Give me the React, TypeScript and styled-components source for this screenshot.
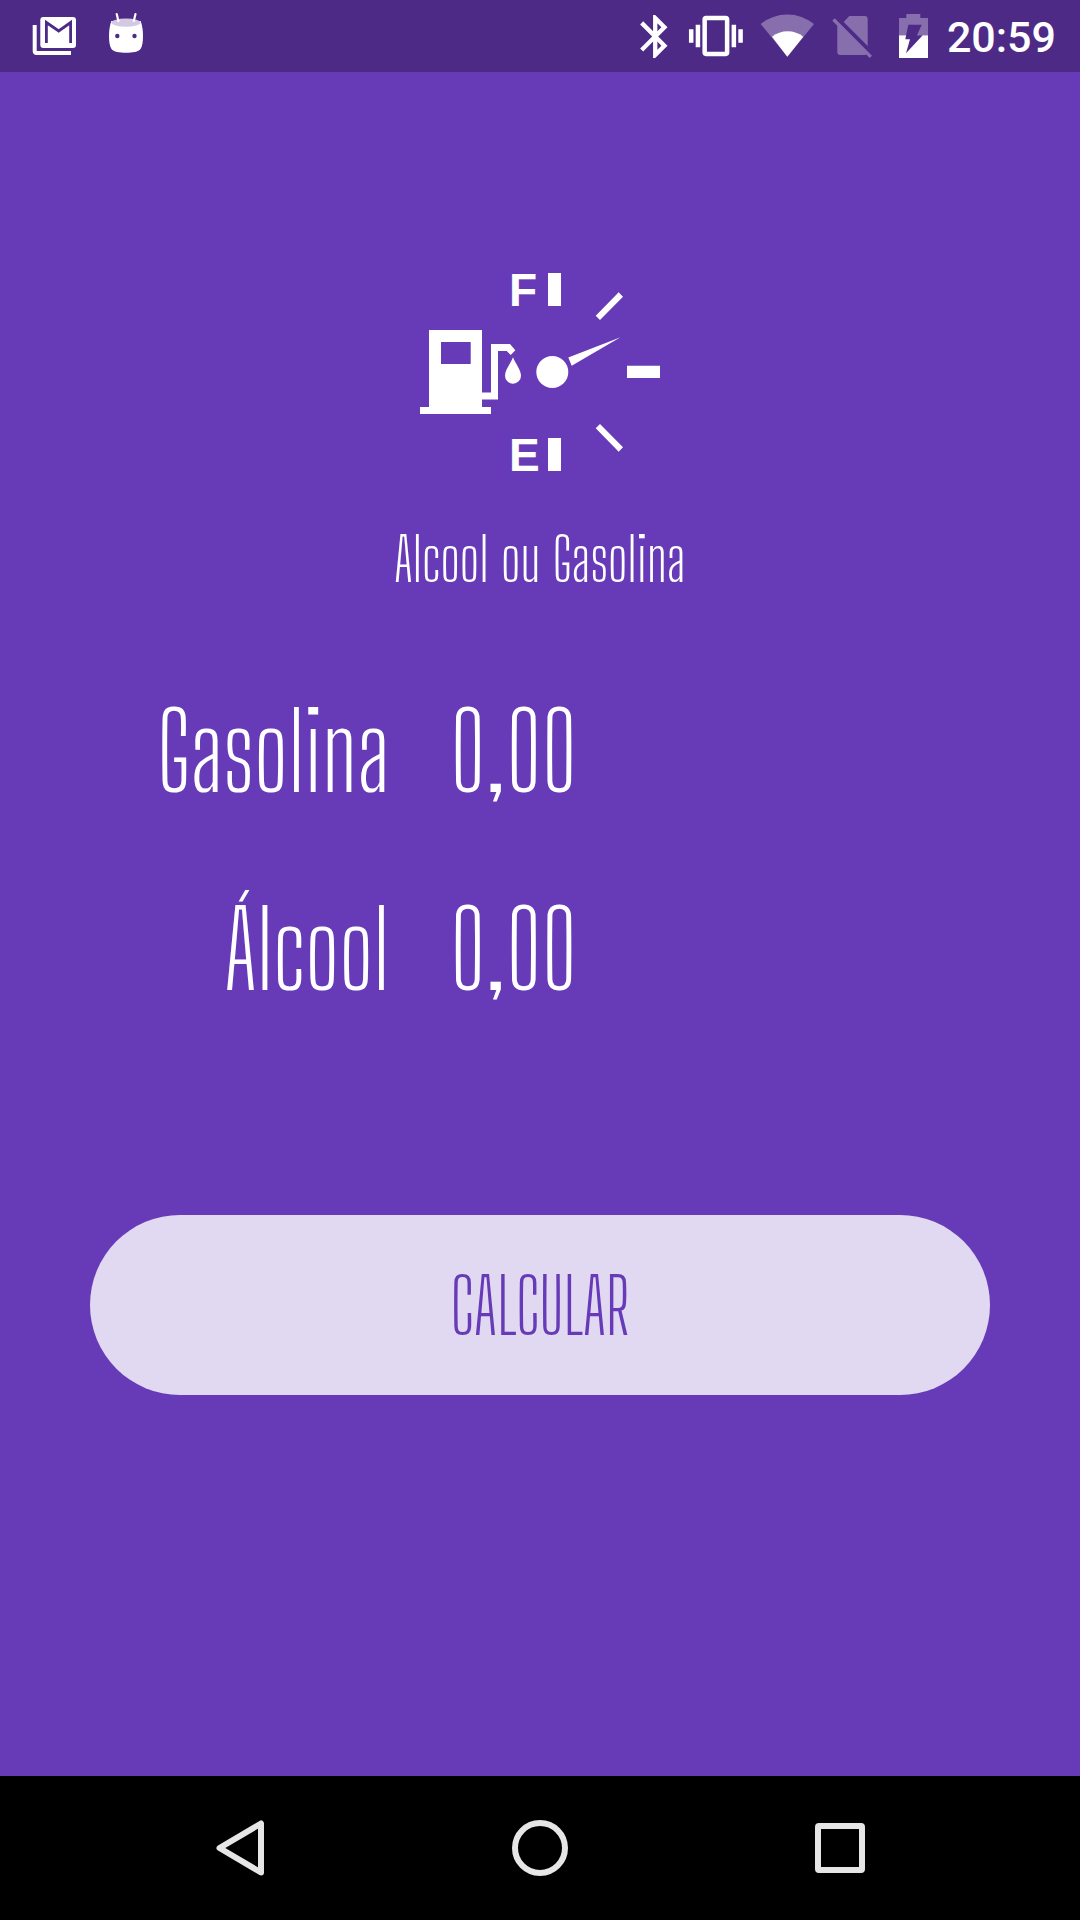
import React from "react";
import styled, { createGlobalStyle } from "styled-components";

const purple = "#673ab7";
const purpleDark = "#4e2a87";

const GlobalStyle = createGlobalStyle`
  *, *::before, *::after { box-sizing: border-box; }
  body { margin: 0; background: ${purple}; }
`;

const Screen = styled.div`
  display: flex;
  flex-direction: column;
  min-height: 100vh;
  background: ${purple};
  color: #fff;
  font-family: "Big Shoulders Display", "Roboto Condensed", Roboto, sans-serif;
  font-weight: 300;
`;

const StatusBar = styled.header`
  display: flex;
  align-items: center;
  justify-content: space-between;
  height: 72px;
  padding: 0 24px 0 32px;
  background: ${purpleDark};
`;

const IconGroup = styled.div<{ $gap: number }>`
  display: flex;
  align-items: center;
  gap: ${(p) => p.$gap}px;
`;

const Icon = styled.svg`
  display: block;
  flex: none;
  fill: #fff;
`;

const Clock = styled.time`
  padding-top: 2px;
  font: 500 43px/70px Roboto, sans-serif;
`;

const Main = styled.main`
  flex: 1;
  display: flex;
  flex-direction: column;
  align-items: center;
  padding: 184px 90px 96px;
`;

const Title = styled.h1`
  margin: 41px 0 96px;
  font-size: 60px;
  line-height: 60px;
  font-weight: inherit;
`;

const Form = styled.form`
  display: flex;
  flex-direction: column;
  gap: 64px;
  width: 100%;
`;

const Field = styled.label`
  display: grid;
  grid-template-columns: 1fr 2fr;
  align-items: center;
  font-size: 105px;
  line-height: 134px;
`;

const FieldName = styled.span`
  text-align: right;
`;

const Price = styled.input`
  width: 100%;
  height: 134px;
  padding: 0 0 0 60px;
  border: 0;
  outline: 0;
  background: transparent;
  color: inherit;
  font: inherit;
`;

const Submit = styled.button`
  height: 180px;
  margin-top: 134px;
  padding: 2px 0 0;
  border: 0;
  border-radius: 90px;
  background: #e1d9f1;
  color: ${purple};
  font: inherit;
  font-size: 75px;
  text-transform: uppercase;
`;

const NavBar = styled.nav`
  display: flex;
  align-items: center;
  justify-content: center;
  gap: 204px;
  height: 144px;
  background: #000;
`;

const NavButton = styled.button`
  display: grid;
  place-items: center;
  width: 96px;
  height: 96px;
  padding: 0;
  border: 0;
  background: transparent;
`;

const NavIcon = styled.svg`
  fill: none;
  stroke: #e6e6e6;
  stroke-width: 6;
  stroke-linejoin: round;
`;

const MailIcon = () => (
  <Icon width="46" height="44" viewBox="0 0 46 44" aria-hidden="true">
    <path d="M.7 11h4v26H39v4H4.7q-4 0-4-4z" />
    <rect x="8.3" y="3" width="35.7" height="31" rx="3" />
    <path d="M14.4 29V8.5L26.7 17l11.9-8.5V29" fill="none" stroke={purpleDark} strokeWidth="2.8" />
  </Icon>
);

const DroidIcon = () => (
  <Icon width="36" height="48" viewBox="0 0 36 48" aria-hidden="true">
    <path d="M3.3 9C1.6 14 1 19 1 24c0 6 .8 10.500 2.500 13 2 2.700 8 3.800 14.500 3.800S30.500 39.700 32.500 37C34.200 34.500 35 30 35 24c0-5-.6-10-2.300-15z" />
    <ellipse cx="18" cy="10.600" rx="14.700" ry="4.100" fill="#d3c9e3" />
    <path d="M8.700 2l1.700 7M27.500 2l-1.700 7" stroke="#fff" strokeWidth="2.200" strokeLinecap="round" />
    <circle cx="9.300" cy="24" r="2.200" fill={purpleDark} />
    <circle cx="26.500" cy="24" r="2.200" fill={purpleDark} />
  </Icon>
);

const BluetoothIcon = () => (
  <Icon width="34" height="44" viewBox="4 1.6 15.8 20.4" aria-hidden="true">
    <path d="M17.71 7.71L12 2h-1v7.59L6.41 5 5 6.41 10.59 12 5 17.59 6.41 19 11 14.41V22h1l5.71-5.71-4.3-4.29 4.3-4.29zM13 5.83l1.880 1.880L13 9.590V5.830zm1.880 10.460L13 18.170v-3.760l1.880 1.880z" />
  </Icon>
);

const VibrateIcon = () => (
  <Icon width="56" height="44" viewBox="-0.4 2.2 24.9 19.6" aria-hidden="true">
    <path d="M0 15h2V9H0v6zm3 2h2V7H3v10zm19-8v6h2V9h-2zm-3 8h2V7h-2v10zM16.500 3h-9C6.670 3 6 3.670 6 4.500v15c0 .83.67 1.500 1.500 1.500h9c.83 0 1.500-.67 1.500-1.500v-15c0-.83-.67-1.500-1.500-1.500zM16 19H8V5h8v14z" />
  </Icon>
);

const WifiIcon = () => (
  <Icon width="56" height="44" viewBox="0 0 56 44" aria-hidden="true">
    <path d="M.7 10A42 42 0 0 1 54 10L27.300 42.700z" opacity="0.32" />
    <path d="M12 22.700A25 25 0 0 1 43.300 22.700L27.300 42.700z" />
  </Icon>
);

const NoSimIcon = () => (
  <Icon width="44" height="44" viewBox="0 0 44 44" aria-hidden="true">
    <g opacity="0.32">
      <path d="M17.300 2H32.700q3 0 3 3V32L11.700 8z" />
      <path d="M.3 6.700L2.700 4.300 40 41.700 37.700 44 34.300 40.600Q33.500 41 32.700 41H8.300q-3 0-3-3V11.700z" />
    </g>
  </Icon>
);

const BatteryIcon = () => (
  <Icon width="39" height="44" viewBox="0 0 39 44" aria-hidden="true">
    <path d="M7 21.300V4h7.300V0h14v4H36v17.300z" opacity="0.32" />
    <path d="M7 21.300h29V44H7z" />
    <path d="M16.300 10.700H29.700L25 21.300h5.700L14 39.300l4-14h-4.700z" fill={purpleDark} />
  </Icon>
);

const LogoText = styled.text`
  font: 700 46px "Liberation Sans", Arial, sans-serif;
`;

const FuelLogo = () => (
  <Icon width="240" height="232" viewBox="0 -16 240 232" role="img" aria-label="Medidor de combustível">
    <path d="M0 135h9V58h53v77h9v7H0z" />
    <path d="M21 70h29.700v22H21z" fill={purple} />
    <path d="M62 120.500h9V72h19l5.300 6.300-4.600 4.700-4-4H78v48.500H62z" />
    <path d="M93 85.300c2.500 6.500 8 12.500 8 18.400a8 8 0 0 1-16 0c0-5.900 5.500-11.900 8-18.400z" />
    <circle cx="132.300" cy="100" r="16" />
    <path d="M200.500 65.200L151.700 93.700 148.300 85.500z" />
    <path d="M128 1h13v33h-13zM128 166h13v33h-13zM207 93.700h33V106h-33z" />
    <path d="M198.700 20.300l4.300 4.400L180 48l-4.300-4.300zM180 152l23 23.300-4.300 4.400-23-23.400z" />
    <LogoText x="89" y="34">F</LogoText>
    <LogoText x="89" y="199">E</LogoText>
  </Icon>
);

export default function App() {
  return (
    <Screen>
      <GlobalStyle />
      <StatusBar>
        <IconGroup $gap={30}>
          <MailIcon />
          <DroidIcon />
        </IconGroup>
        <IconGroup $gap={16}>
          <BluetoothIcon />
          <VibrateIcon />
          <WifiIcon />
          <NoSimIcon />
          <BatteryIcon />
          <Clock>20:59</Clock>
        </IconGroup>
      </StatusBar>
      <Main>
        <FuelLogo />
        <Title>Alcool ou Gasolina</Title>
        <Form onSubmit={(e: React.FormEvent) => e.preventDefault()}>
          <Field>
            <FieldName>Gasolina</FieldName>
            <Price name="gasolina" inputMode="decimal" defaultValue="0,00" />
          </Field>
          <Field>
            <FieldName>Álcool</FieldName>
            <Price name="alcool" inputMode="decimal" defaultValue="0,00" />
          </Field>
          <Submit type="submit">Calcular</Submit>
        </Form>
      </Main>
      <NavBar>
        <NavButton type="button" aria-label="Voltar">
          <NavIcon width="48" height="56" viewBox="0 0 48 56">
            <path d="M45 3.500V52.500L3.500 28z" />
          </NavIcon>
        </NavButton>
        <NavButton type="button" aria-label="Início">
          <NavIcon width="56" height="56" viewBox="0 0 56 56">
            <circle cx="28" cy="28" r="25" />
          </NavIcon>
        </NavButton>
        <NavButton type="button" aria-label="Recentes">
          <NavIcon width="50" height="50" viewBox="0 0 50 50">
            <rect x="3" y="3" width="44" height="44" rx="1" />
          </NavIcon>
        </NavButton>
      </NavBar>
    </Screen>
  );
}
